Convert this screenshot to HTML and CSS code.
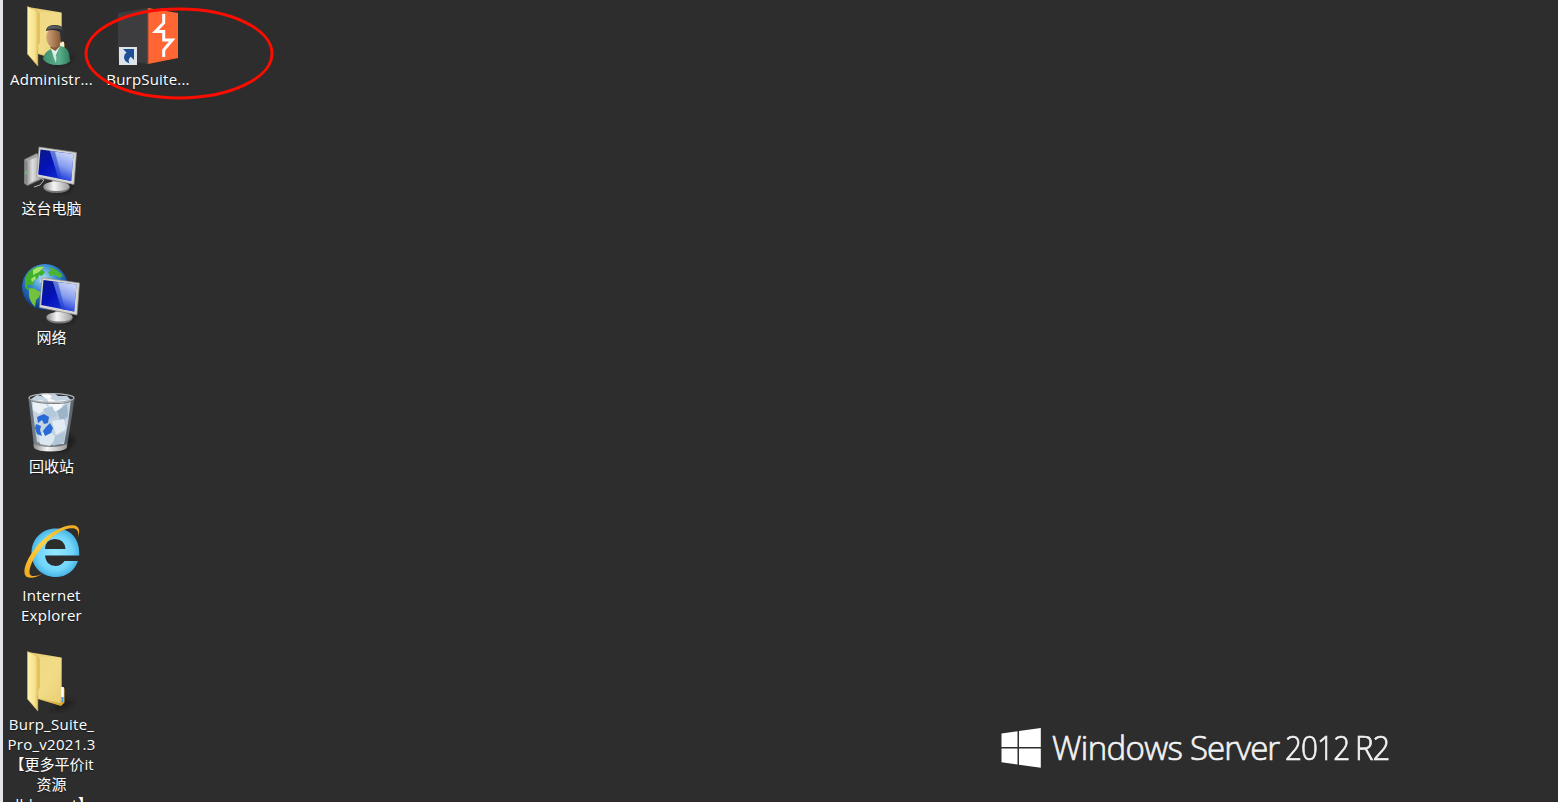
FILE: index.html
```html
<!DOCTYPE html>
<html lang="zh-CN">
<head>
<meta charset="utf-8">
<title>Windows Server 2012 R2</title>
<link rel="stylesheet" href="styles.css">
</head>
<body>
<main class="desktop">
  <svg class="defs" width="0" height="0" aria-hidden="true">
    <defs>
      <linearGradient id="fold" x1="0" x2="1"><stop offset="0" stop-color="#fff3ae"/><stop offset=".6" stop-color="#f7e28f"/><stop offset="1" stop-color="#dcb650"/></linearGradient>
      <linearGradient id="back" x1="0" y1="0" x2="1" y2="1"><stop offset="0" stop-color="#e9cd74"/><stop offset=".55" stop-color="#eed77f"/><stop offset="1" stop-color="#cf9f28"/></linearGradient>
      <linearGradient id="screen" x1="0" y1="0" x2="1" y2="1"><stop offset="0" stop-color="#0a1a80"/><stop offset=".4" stop-color="#0412b8"/><stop offset="1" stop-color="#1c3ce4"/></linearGradient>
      <linearGradient id="glare" x1=".7" y1="0" x2=".4" y2="1"><stop offset="0" stop-color="#e8f0ff"/><stop offset=".5" stop-color="#94abf4"/><stop offset="1" stop-color="#0f2bd8"/></linearGradient>
      <linearGradient id="metal" x1="0" x2="1"><stop offset="0" stop-color="#8c8c8c"/><stop offset=".4" stop-color="#f6f6f6"/><stop offset="1" stop-color="#9c9c9c"/></linearGradient>
      <linearGradient id="tower" x1="0" x2="1"><stop offset="0" stop-color="#9c9c9c"/><stop offset=".4" stop-color="#dedede"/><stop offset="1" stop-color="#b0b0b0"/></linearGradient>
      <radialGradient id="ie" cx=".5" cy=".5" r=".55"><stop offset="0" stop-color="#93e8ff"/><stop offset=".65" stop-color="#72d6fa"/><stop offset="1" stop-color="#3ba9de"/></radialGradient>
      <linearGradient id="gold" x1="0" y1="1" x2="1" y2="0"><stop offset="0" stop-color="#f2a81c"/><stop offset=".5" stop-color="#ffd23e"/><stop offset="1" stop-color="#f0a61e"/></linearGradient>
      <radialGradient id="ocean" cx=".45" cy=".3" r=".7"><stop offset="0" stop-color="#a8def5"/><stop offset=".45" stop-color="#2f83cf"/><stop offset="1" stop-color="#08307c"/></radialGradient>
      <linearGradient id="face" x1="0" x2="1"><stop offset="0" stop-color="#d3a77c"/><stop offset="1" stop-color="#80512f"/></linearGradient>
      <linearGradient id="coat" x1="0" x2="1"><stop offset="0" stop-color="#3f8f6c"/><stop offset=".6" stop-color="#5bb08b"/><stop offset="1" stop-color="#2f7b5b"/></linearGradient>
      <linearGradient id="glass" x1="0" x2="1"><stop offset="0" stop-color="#8fa2b2"/><stop offset=".3" stop-color="#dce6ee"/><stop offset="1" stop-color="#7d8e9c"/></linearGradient>
      <filter id="soft" x="-50%" y="-50%" width="200%" height="200%"><feGaussianBlur stdDeviation="2"/></filter>
      <g id="folder">
        <path d="M62 55l13 1-9 8-16 2z" fill="#181818" opacity=".6" filter="url(#soft)"/>
        <path d="M28 7l33.500 5.500v29.500l3 1.500v14l-3.500 3.500-23-7z" fill="url(#back)"/>
        <path d="M38 11.500l23.500 1.500v29l-1 16-22-5z" fill="#f1dc89" opacity=".75"/>
        <path d="M27.500 6.500l10.500 5q1.500 1 1.300 3v28.500l-1.500 1.500v21.500l-10.300-12z" fill="url(#fold)" stroke="#d8b85a" stroke-width=".6"/>
      </g>
      <g id="monitor">
        <path d="M55 181l20 1-7 10H55z" fill="#111" opacity=".5" filter="url(#soft)"/>
        <path d="M53 178l10 2 1 6H51z" fill="#aaa"/>
        <ellipse cx="56.500" cy="187.500" rx="13.200" ry="5.500" fill="#777"/>
        <ellipse cx="56.500" cy="186.300" rx="13" ry="4.800" fill="url(#metal)"/>
        <path d="M39 147l37.500 5.500-2.500 32-37.500-7.500z" fill="#d6d6d2" stroke="#8d8d8d" stroke-width=".7"/>
        <path d="M40.500 149.500l33 4.500-2.300 27-33-6.500z" fill="url(#screen)"/>
        <path d="M50 151l23.500 3-2.300 27-12.500-2.500z" fill="url(#glare)" opacity=".9"/>
        <path d="M50 151l5 .7 7 27.500-4-.7z" fill="#2445c9" opacity=".6"/>
      </g>
    </defs>
  </svg>

  <section class="icons">
    <div class="item">
      <svg class="icon" viewBox="19 4 64 64">
        <use href="#folder"/>
        <path d="M60 41l4 1v8h-4z" fill="#f6f0d0"/>
        <path d="M43 59q1-7 8-10l9-3q7 1 9 7l1.200 8q-3 4-13 4-10 0-14.200-6z" fill="url(#coat)"/>
        <path d="M51 49l4 8 4.500-10-1-3-6 1z" fill="#e9f0ec"/>
        <path d="M51 48l2.500 9 2.500 6 .5-6z" fill="#d5e6df"/>
        <path d="M50 42l9-1 1 5-4.500 5-5-3z" fill="#875839"/>
        <ellipse cx="54" cy="37.500" rx="7.800" ry="10" fill="url(#face)"/>
        <path d="M46 31q0-5 7-6 9-.5 11.500 5l-1 9-2.500 4-1-11q-6-3.500-14-1z" fill="#2d3034"/>
        <path d="M47 30q0-4 6-4.500 7 0 10 4-8-2-16 .5z" fill="#555b60"/>
      </svg>
      <span class="label"><span class="line latin">Administr...</span></span>
    </div>
    <div class="item">
      <svg class="icon" viewBox="19 133 64 64">
        <path d="M24.500 159.500l12-6 4 2v24l-13 6-3-2z" fill="#a5a5a5" stroke="#777" stroke-width=".6"/>
        <path d="M27.500 161l12-5v22l-12 6.500z" fill="url(#tower)"/>
        <path d="M24.800 160l2.500 1v24l-2.800-2z" fill="#888"/>
        <path d="M25.200 171l1.400.5v3l-1.400-.5z" fill="#62d66b"/>
        <path d="M40 178l4 2-4 5-6 2" fill="none" stroke="#b8b8b8"/>
        <use href="#monitor"/>
      </svg>
      <span class="label"><span class="line">这台电脑</span></span>
    </div>
    <div class="item">
      <svg class="icon" viewBox="19 262 64 64">
        <circle cx="45" cy="287" r="23" fill="url(#ocean)"/>
        <path d="M25 279q3-9 11-12l8-1-2 4 3 2-3 4-3-1-1 3-4 3-2 5-3-2-2 3 3 1 3 2q-5 1-8-3z" fill="#43b02b"/>
        <path d="M29 289q5-2 9 2l3 1-2 5-3 3-1 7q-5-5-6-11z" fill="#74c23c"/>
        <path d="M49 267q9 2 14 9l-4 2-4-3-5 1-2-4 3-1z" fill="#4db336"/>
        <path d="M33 270q5-4 11-3l-5 5-6 3zM31 279l4-3 1 3-4 3z" fill="#a6e36a"/>
        <path d="M40 280l3-1 1 3-4 1z" fill="#c4e4ef" opacity=".7"/>
        <use href="#monitor" transform="translate(3 130.500)"/>
      </svg>
      <span class="label"><span class="line">网络</span></span>
    </div>
    <div class="item">
      <svg class="icon" viewBox="19 391 64 64">
        <path d="M62 430l13 10-9 11H46z" fill="#111" opacity=".6" filter="url(#soft)"/>
        <path d="M28.500 399l5.500 48q1 4 17 4t16-4l7.500-48z" fill="url(#glass)" opacity=".55"/>
        <path d="M31 399l6-4 8 2 5-3 4-1 4 3 9 0 4 4-3 23-4 21-15 1-12-3z" fill="#c3d3e1"/>
        <path d="M33 401l9-1 6 7-9 7-6-4z" fill="#e9f1f7"/>
        <path d="M47 397l9 4 10-1-6 10-10 2z" fill="#f5f9fc"/>
        <path d="M57 411l10-7 1 12-7 7z" fill="#9eb4c8"/>
        <path d="M52 421l12-2 2 10-10 6z" fill="#e3ecf4"/>
        <path d="M39 434l10-3 7 6-6 9-10-2z" fill="#dbe7f1"/>
        <path d="M55 436l10-4-1 10-11 4z" fill="#afc4d7"/>
        <path d="M43 409l9-3 5 10-8 3z" fill="#b3c8da"/>
        <path d="M39 394l8 5 5-2-4-4z" fill="#fff"/>
        <path d="M37 417l7-3 5 3-1 6-4 1-2-4-4 3zM36 424l5 2-1 4 2 6-5-2-2-6zM46 427l4-4 3 5-2 5-6 3-2-5z" fill="#2a6ad6"/>
        <ellipse cx="51.500" cy="398" rx="22.500" ry="4.300" fill="none" stroke="#b2b7ba" stroke-width="1.300"/>
        <path d="M29 399q3 4 22.500 4.500T74 399" fill="none" stroke="#777e83" stroke-width="1"/>
        <path d="M33.500 444q6 3 17 3t16.500-3l-.5 4q-4 3.500-16 3.500t-16.500-3.500z" fill="url(#metal)"/>
      </svg>
      <span class="label"><span class="line">回收站</span></span>
    </div>
    <div class="item">
      <svg class="icon" viewBox="19 520 64 64">
        <path fill="url(#ie)" fill-rule="evenodd" d="M79.300 555.500H45q1 10.500 10.500 10.500 5.500 0 9-5h13.500C74.500 571 66 577 56 577c-14 0-24.500-10-24.500-24C31.500 539 42 528.500 56 528.500S80 538 79.300 555.500zM45 549h20.500q-1-10-10.500-10T45 549z"/>
        <path fill="url(#gold)" d="M77.500 538q2.500-7.500-3-9.500c-8-2-21 5-31 17C33 557 26.500 572 31 575.500q4 1.800 12-2-10 6-16 3.500c-6-4-1-18 11-32C50 531 67 523.500 75 525.500c5 1.500 5 7 2.500 12.500z"/>
      </svg>
      <span class="label"><span class="line latin">Internet</span><span class="line latin">Explorer</span></span>
    </div>
    <div class="item">
      <svg class="icon" viewBox="19 649 64 64">
        <use href="#folder" transform="translate(0 645)"/>
        <path d="M61.200 687h2.600v14.500h-2.600z" fill="#fff"/>
        <path d="M61.400 697h2.200v5h-2.200z" fill="#4a98e8"/>
      </svg>
      <span class="label"><span class="line latin">Burp_Suite_</span><span class="line latin">Pro_v2021.3</span><span class="line">【更多平价it</span><span class="line">资源</span><span class="line latin">dldoc.net】</span></span>
    </div>
    <div class="item">
      <svg class="icon" viewBox="116 4 64 64">
        <path d="M118 13l30-5v56l-30-5z" fill="#3d3d40"/>
        <path d="M148 8l30 5v45l-30 6z" fill="#ff6633"/>
        <path d="M148 8v56" stroke="#9a4a32" stroke-width="1"/>
        <path d="M163.700 14v9l-8.200 8.500h8.200V40h8.500l-8.500 10v7" fill="none" stroke="#fff" stroke-width="3"/>
        <path d="M119 47h18v18h-18z" fill="#dce3ea"/>
        <path d="M123 49h11v11l-3.200-3.200q-3.500 3-1.300 6.700-5.500-2-5.500-6.500 0-3 2.500-4.500z" fill="#1d4f97"/>
      </svg>
      <span class="label"><span class="line latin tight">BurpSuite...</span></span>
    </div>
  </section>

  <footer class="brand">
    <svg class="flag" viewBox="0 0 40 40">
      <path d="M.5 5.500l16-2.300v15.900H.5zM18 3l21.800-3v19.100H18zM.5 20.500h16v16L.5 34.200zM18 20.500h21.800v19.300L18 36.800z" fill="#fff"/>
    </svg>
    <span class="brand-name"><span class="product">Windows</span><span class="edition">Server</span><span class="year">2012</span><span class="release">R2</span></span>
  </footer>

  <svg class="marker" viewBox="0 0 190 94"><ellipse cx="95" cy="47.500" rx="93" ry="44.500" fill="none" stroke="#fd0d00" stroke-width="3"/></svg>
</main>
</body>
</html>
```
FILE: styles.css
```css
html, body { margin: 0; height: 100%; }
body { overflow: hidden; background: #2d2d2d; }
.desktop {
  position: relative;
  box-sizing: border-box;
  width: 100%;
  height: 802px;
  overflow: hidden;
  border-left: 3px solid #e4e5ea;
  background: #2d2d2d linear-gradient(#30262b, #30262b) 0 100% / 100% 1px no-repeat;
  color: #fff;
  font: 15px/20px "Open Sans", "Noto Sans CJK SC", sans-serif;
}
.defs { position: absolute; }
.icons {
  display: grid;
  grid-auto-flow: column;
  grid-template-rows: repeat(6, 129px);
  grid-auto-columns: 97px;
  padding-top: 4px;
}
.item { display: flex; flex-direction: column; align-items: center; }
.icon { flex: none; width: 64px; height: 64px; margin-right: 2px; }
.label { display: flex; flex-direction: column; align-items: center; padding-top: 1px; white-space: nowrap; text-shadow: 0 1px 1px #1a1a1a; }
.latin { letter-spacing: .28px; }
.tight { letter-spacing: .2px; margin-right: 1px; }
.brand {
  position: absolute;
  left: 998px;
  top: 728px;
  display: flex;
  align-items: center;
  gap: 11px;
}
.flag { width: 40px; height: 40px; }
.brand-name {
  display: grid;
  grid-template-columns: 138px 95px 70px 40px;
  font: 300 33px/40px "Open Sans", sans-serif;
  color: #f2f2f2;
  -webkit-text-stroke: .7px #f2f2f2;
}
.product { letter-spacing: -.6px; }
.edition { letter-spacing: -1px; }
.year, .release { transform: scaleX(.9); transform-origin: 0 50%; letter-spacing: -1px; }
.release { transform: scaleX(.94); }
.marker { position: absolute; left: 81px; top: 6px; width: 190px; height: 94px; }
```
